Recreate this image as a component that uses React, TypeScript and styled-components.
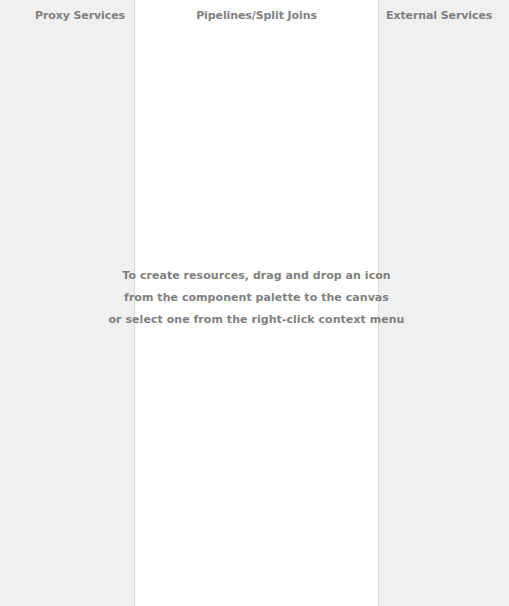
import styled, { createGlobalStyle } from "styled-components";

const GlobalStyle = createGlobalStyle`
  html, body, #root {
    margin: 0;
    padding: 0;
    height: 100%;
  }
  body {
    font-family: "DejaVu Sans", "Liberation Sans", sans-serif;
    background: #f0f0f0;
    overflow: hidden;
  }
`;

const Canvas = styled.div`
  position: relative;
  height: 100vh;
  display: grid;
  grid-template-columns: 134px 1fr 130px;
  background: #f0f0f0;
`;

const Column = styled.section<{ $align: "left" | "center" | "right"; $main?: boolean }>`
  display: flex;
  flex-direction: column;
  background: ${({ $main }) => ($main ? "#ffffff" : "#f0f0f0")};
  border-left: ${({ $main }) => ($main ? "1px solid #d9d9d9" : "none")};
  border-right: ${({ $main }) => ($main ? "1px solid #d9d9d9" : "none")};
  text-align: ${({ $align }) => $align};
`;

const ColumnTitle = styled.h2<{ $pad: string }>`
  margin: 0;
  padding: ${({ $pad }) => $pad};
  font-size: 11px;
  font-weight: bold;
  letter-spacing: -0.1px;
  color: #808080;
  line-height: 14px;
`;

// sits over the middle column, centred on it
const Hint = styled.div`
  position: absolute;
  left: 4px;
  right: 0;
  top: 265px;
  text-align: center;
  font-size: 11px;
  font-weight: bold;
  letter-spacing: 0.05px;
  line-height: 22px;
  color: #808080;
  pointer-events: none;
`;

export default function App() {
  return (
    <>
      <GlobalStyle />
      <Canvas>
        <Column $align="right">
          <ColumnTitle $pad="9px 9px 0 0">Proxy Services</ColumnTitle>
        </Column>
        <Column $align="center" $main>
          <ColumnTitle $pad="9px 0 0">Pipelines/Split Joins</ColumnTitle>
        </Column>
        <Column $align="left">
          <ColumnTitle $pad="9px 0 0 7px">External Services</ColumnTitle>
        </Column>
        <Hint>
          To create resources, drag and drop an icon
          <br />
          from the component palette to the canvas
          <br />
          or select one from the right-click context menu
        </Hint>
      </Canvas>
    </>
  );
}
